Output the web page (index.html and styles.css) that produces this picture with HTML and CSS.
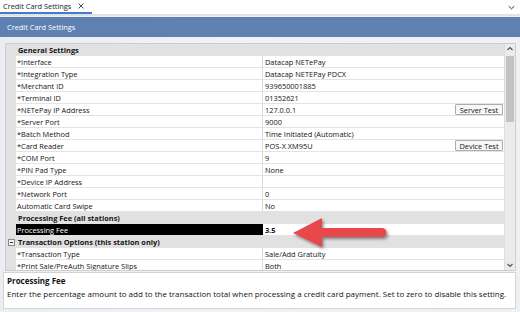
FILE: index.html
```html
<!DOCTYPE html>
<html lang="en">
<head>
    <meta charset="UTF-8">
    <title>Credit Card Settings</title>
    <link rel="stylesheet" href="styles.css">
</head>
<body>
    <div class="tabbar">
        <div class="tab">
            <span>Credit Card Settings</span>
            <svg class="tab-close" width="6" height="6" viewBox="0 0 6 6"><path d="M0.5 0.5 L5.5 5.5 M5.5 0.5 L0.5 5.5" stroke="#333" stroke-width="0.9"/></svg>
        </div>
        <svg class="tab-menu" width="7" height="5" viewBox="0 0 7 5"><path d="M0.8 1.2 L3.5 3.8 L6.2 1.2" fill="none" stroke="#333" stroke-width="1"/></svg>
    </div>

    <div class="header">Credit Card Settings</div>

    <div class="main">
        <div class="grid">
            <div class="rows">
                <div class="cat"><span class="gutter"></span>General Settings</div>
                <div class="row"><span class="gutter"></span><span class="label">*Interface</span><span class="value">Datacap NETePay</span></div>
                <div class="row"><span class="gutter"></span><span class="label">*Integration Type</span><span class="value">Datacap NETEPay PDCX</span></div>
                <div class="row"><span class="gutter"></span><span class="label">*Merchant ID</span><span class="value">939650001885</span></div>
                <div class="row"><span class="gutter"></span><span class="label">*Terminal ID</span><span class="value">01352621</span></div>
                <div class="row"><span class="gutter"></span><span class="label">*NETePay IP Address</span><span class="value">127.0.0.1<button class="cell-btn">Server Test</button></span></div>
                <div class="row"><span class="gutter"></span><span class="label">*Server Port</span><span class="value">9000</span></div>
                <div class="row"><span class="gutter"></span><span class="label">*Batch Method</span><span class="value">Time Initiated (Automatic)</span></div>
                <div class="row"><span class="gutter"></span><span class="label">*Card Reader</span><span class="value">POS-X XM95U<button class="cell-btn">Device Test</button></span></div>
                <div class="row"><span class="gutter"></span><span class="label">*COM Port</span><span class="value">9</span></div>
                <div class="row"><span class="gutter"></span><span class="label">*PIN Pad Type</span><span class="value">None</span></div>
                <div class="row"><span class="gutter"></span><span class="label">*Device IP Address</span><span class="value"></span></div>
                <div class="row"><span class="gutter"></span><span class="label">*Network Port</span><span class="value">0</span></div>
                <div class="row"><span class="gutter"></span><span class="label">Automatic Card Swipe</span><span class="value">No</span></div>
                <div class="cat"><span class="gutter"></span>Processing Fee (all stations)</div>
                <div class="row selected"><span class="gutter"></span><span class="label">Processing Fee</span><span class="value">3.5</span></div>
                <div class="cat"><span class="gutter"><span class="collapse"></span></span>Transaction Options (this station only)</div>
                <div class="row"><span class="gutter"></span><span class="label">*Transaction Type</span><span class="value">Sale/Add Gratuity</span></div>
                <div class="row"><span class="gutter"></span><span class="label">*Print Sale/PreAuth Signature Slips</span><span class="value">Both</span></div>
            </div>
            <div class="scrollbar">
                <svg class="scroll-arrow" width="10" height="10" viewBox="0 0 10 10"><path d="M2.5 6 L5 3.5 L7.5 6" fill="none" stroke="#505050" stroke-width="1.2"/></svg>
                <div class="thumb"></div>
                <svg class="scroll-arrow down" width="10" height="10" viewBox="0 0 10 10"><path d="M2.5 4 L5 6.5 L7.5 4" fill="none" stroke="#505050" stroke-width="1.2"/></svg>
            </div>
        </div>

        <div class="description">
            <div class="desc-title">Processing Fee</div>
            <div class="desc-text">Enter the percentage amount to add to the transaction total when processing a credit card payment. Set to zero to disable this setting.</div>
        </div>
    </div>

    <svg class="callout" width="110" height="40" viewBox="0 0 110 40">
        <defs>
            <filter id="shadow" x="-20%" y="-40%" width="140%" height="180%">
                <feDropShadow dx="1.5" dy="2" stdDeviation="1.5" flood-color="#000" flood-opacity="0.45"/>
            </filter>
        </defs>
        <g filter="url(#shadow)" fill="#e8474b">
            <path d="M3 18 L32 3 L32 13 L92 13 A4.5 4.5 0 0 1 92 22 L32 22 L32 32 Z"/>
        </g>
    </svg>
</body>
</html>
```

FILE: styles.css
```css
body {
    margin: 0;
    width: 520px;
    height: 312px;
    overflow: hidden;
    position: relative;
    font-family: "Open Sans", "Noto Sans", sans-serif;
    font-size: 7.4px;
    color: #141414;
    background: linear-gradient(100deg, #e9edf3 0, #f1f2f4 40%, #eef0f2 100%);
}
.tabbar {
    height: 14px;
    background: #ffffff;
    border-bottom: 2px solid #e2e2e2;
    display: flex;
    justify-content: space-between;
    align-items: stretch;
}
.tab {
    display: flex;
    align-items: center;
    gap: 7px;
    padding: 0 8px 0 3px;
    border-bottom: 2px solid #3f7cd0;
    color: #222;
}
.tab-menu {
    align-self: center;
    margin-right: 5px;
}
.header {
    margin-top: 1px;
    height: 20px;
    line-height: 20px;
    padding-left: 7px;
    background-color: #5f81b2;
    color: #ffffff;
}
.main {
    padding: 6px 4px 0 3px;
}
.grid {
    margin-left: 2px;
    height: 226px;
    border: 1px solid #cdcdcd;
    background: #ffffff;
    display: flex;
    overflow: hidden;
}
.rows {
    flex: 1;
    overflow: hidden;
}
.row, .cat {
    height: 12px;
    box-sizing: border-box;
    display: flex;
    align-items: center;
    white-space: nowrap;
}
.row {
    border-bottom: 1px solid #e3e3e3;
}
.cat {
    background: #e1e1e1;
    font-weight: bold;
}
.gutter {
    width: 10px;
    height: 100%;
    flex-shrink: 0;
    background: #e1e1e1;
    display: flex;
    align-items: center;
    justify-content: center;
    margin-right: 2px;
}
.row .gutter {
    margin-right: 0;
}
.collapse {
    width: 5px;
    height: 5px;
    border: 1px solid #8a8a8a;
    background: #f4f4f4;
    position: relative;
}
.collapse::after {
    content: '';
    position: absolute;
    left: 1px;
    right: 1px;
    top: 2px;
    height: 1px;
    background: #333;
}
.label {
    width: 247px;
    height: 100%;
    box-sizing: border-box;
    padding-left: 1px;
    border-right: 1px solid #dadada;
    display: flex;
    align-items: center;
}
.value {
    flex: 1;
    height: 100%;
    padding-left: 2px;
    display: flex;
    align-items: center;
}
.selected .label {
    background: #000000;
    color: #ffffff;
    border-right-color: #000000;
}
.selected .value {
    font-weight: bold;
}
.cell-btn {
    margin-left: auto;
    margin-right: 1px;
    width: 48px;
    height: 11px;
    padding: 0;
    font-family: inherit;
    font-size: 7.4px;
    color: #141414;
    background: #f7f7f7;
    border: 1px solid #acacac;
    border-radius: 1px;
}
.scrollbar {
    width: 10px;
    background: #ebebeb;
    border-left: 1px solid #dcdcdc;
    display: flex;
    flex-direction: column;
}
.scroll-arrow {
    display: block;
}
.scroll-arrow.down {
    margin-top: auto;
}
.thumb {
    margin: 2px 1px 0 1px;
    height: 66px;
    background: #c2c2c2;
}
.description {
    margin-top: 1px;
    height: 37px;
    box-sizing: border-box;
    border: 1px solid #d4d4d4;
    background: #ffffff;
    padding: 2px 3px;
    font-size: 8px;
}
.desc-title {
    font-weight: bold;
    line-height: 12px;
}
.desc-text {
    margin-top: 1px;
    line-height: 12px;
}
.callout {
    position: absolute;
    left: 290px;
    top: 215px;
}
```
